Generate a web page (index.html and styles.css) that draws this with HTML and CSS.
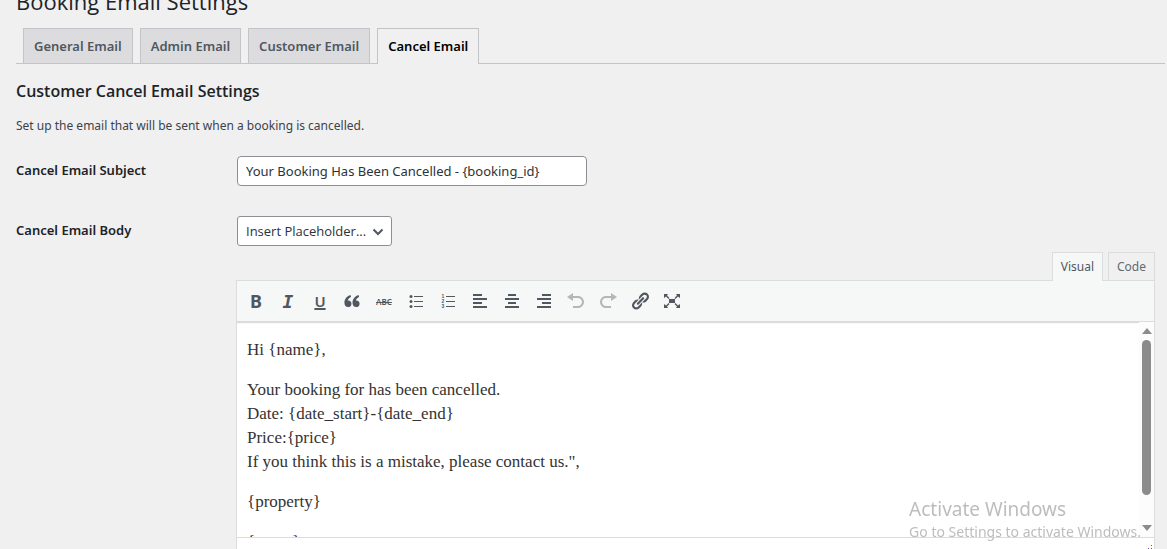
FILE: index.html
```html
<!DOCTYPE html>
<html lang="en">
<head>
<meta charset="UTF-8">
<meta name="viewport" content="width=device-width, initial-scale=1.0">
<title>Booking Email Settings</title>
<link rel="stylesheet" href="styles.css">
</head>
<body>

<div class="wrap">
  <h1>Booking Email Settings</h1>

  <nav class="nav-tab-wrapper">
    <a href="#general" class="nav-tab">General Email</a>
    <a href="#admin" class="nav-tab">Admin Email</a>
    <a href="#customer" class="nav-tab">Customer Email</a>
    <a href="#cancel" class="nav-tab nav-tab-active">Cancel Email</a>
  </nav>

  <form class="settings">
    <h2>Customer Cancel Email Settings</h2>
    <p class="description">Set up the email that will be sent when a booking is cancelled.</p>

    <div class="form-row">
      <label for="subject">Cancel Email Subject</label>
      <div class="field">
        <input type="text" id="subject" class="regular-text" value="Your Booking Has Been Cancelled - {booking_id}">
      </div>
    </div>

    <div class="form-row">
      <label for="placeholder">Cancel Email Body</label>
      <div class="field">
        <div class="select-wrap">
          <select id="placeholder">
            <option>Insert Placeholder...</option>
            <option>{name}</option>
            <option>{booking_id}</option>
            <option>{price}</option>
          </select>
          <svg class="chevron" viewBox="0 0 12 8"><path d="M1.500 1.500L6 6l4.500-4.500"/></svg>
        </div>

        <div class="editor-wrap">
          <div class="editor-tabs">
            <button type="button" class="switch-editor active">Visual</button>
            <button type="button" class="switch-editor">Code</button>
          </div>

          <div class="editor">
            <div class="toolbar">
              <button type="button" class="tool bold" aria-label="Bold">B</button>
              <button type="button" class="tool italic" aria-label="Italic">I</button>
              <button type="button" class="tool underline" aria-label="Underline">U</button>
              <button type="button" class="tool" aria-label="Blockquote">
                <svg viewBox="0 0 20 20"><path d="M8.500 4C5 5 2.400 8 2.400 11.800c0 2.700 1.500 4.300 3.700 4.300 2 0 3.400-1.400 3.400-3.400 0-1.900-1.300-3.200-3.100-3.200-.3 0-.6.100-.8.200.3-1.600 1.400-2.800 3.400-3.800zM16.600 4c-3.500 1-6.100 4-6.100 7.800 0 2.700 1.500 4.300 3.700 4.300 2 0 3.400-1.400 3.400-3.400 0-1.900-1.300-3.200-3.100-3.200-.3 0-.6.100-.8.200.3-1.600 1.400-2.800 3.400-3.800z"/></svg>
              </button>
              <button type="button" class="tool strike" aria-label="Strikethrough">ABC</button>
              <button type="button" class="tool" aria-label="Bulleted list">
                <svg viewBox="0 0 20 20"><path d="M8 5h9v1H8zM8 10h9v1H8zM8 15h9v1H8z"/><circle cx="5" cy="5.500" r="1.500"/><circle cx="5" cy="10.500" r="1.500"/><circle cx="5" cy="15.500" r="1.500"/></svg>
              </button>
              <button type="button" class="tool" aria-label="Numbered list">
                <svg viewBox="0 0 20 20"><path d="M8 5h9v1H8zM8 10h9v1H8zM8 15h9v1H8z"/><text x="5" y="7">1</text><text x="5" y="12">2</text><text x="5" y="17">3</text></svg>
              </button>
              <button type="button" class="tool" aria-label="Align left">
                <svg viewBox="0 0 20 20"><path d="M3 3h9v2H3zM3 7h14v2H3zM3 11h9v2H3zM3 15h14v2H3z"/></svg>
              </button>
              <button type="button" class="tool" aria-label="Align center">
                <svg viewBox="0 0 20 20"><path d="M6 3h8v2H6zM3 7h14v2H3zM6 11h8v2H6zM3 15h14v2H3z"/></svg>
              </button>
              <button type="button" class="tool" aria-label="Align right">
                <svg viewBox="0 0 20 20"><path d="M8 3h9v2H8zM3 7h14v2H3zM8 11h9v2H8zM3 15h14v2H3z"/></svg>
              </button>
              <button type="button" class="tool" aria-label="Undo" disabled>
                <svg viewBox="0 0 20 20"><path d="M12 5H7V2L1 6l6 4V7h5c2.200 0 4 1.800 4 4s-1.800 4-4 4H7v2h5c3.300 0 6-2.700 6-6s-2.700-6-6-6z"/></svg>
              </button>
              <button type="button" class="tool" aria-label="Redo" disabled>
                <svg viewBox="0 0 20 20"><path d="M8 5h5V2l6 4-6 4V7H8c-2.200 0-4 1.800-4 4s1.800 4 4 4h5v2H8c-3.300 0-6-2.700-6-6s2.700-6 6-6z"/></svg>
              </button>
              <button type="button" class="tool" aria-label="Insert link">
                <svg viewBox="0 0 20 20"><path d="M17.740 2.760c1.680 1.690 1.680 4.410 0 6.100l-1.530 1.520c-1.120 1.120-2.700 1.470-4.140 1.090l2.620-2.610.76-.77.76-.76c.84-.84.84-2.200 0-3.040-.84-.85-2.200-.85-3.040 0l-.77.76-3.380 3.380c-.37-1.440-.02-3.020 1.100-4.140l1.520-1.530c1.690-1.680 4.420-1.680 6.100 0zM8.590 13.430l5.340-5.340c.42-.42.42-1.100 0-1.520-.44-.43-1.130-.39-1.530 0l-5.330 5.340c-.42.42-.42 1.100 0 1.520.44.43 1.130.39 1.520 0zM7.830 15.720l4.140-4.150c.38 1.440.03 3.020-1.090 4.140l-1.520 1.530c-1.690 1.680-4.410 1.680-6.100 0-1.680-1.680-1.680-4.420 0-6.100l1.530-1.520c1.120-1.120 2.700-1.470 4.140-1.100l-4.140 4.150c-.85.84-.85 2.200 0 3.050.84.84 2.200.84 3.040 0z"/></svg>
              </button>
              <button type="button" class="tool" aria-label="Fullscreen">
                <svg viewBox="0 0 20 20"><path d="M7 8h6v4H7zM2 3h4L5 4.500 7.500 7l-1 1L4 5.500 2 7zM18 3h-4l1 1.500L12.500 7l1 1L16 5.500 18 7zM2 17h4l-1-1.500L7.500 13l-1-1L4 14.500 2 13zM18 17h-4l1-1.500-2.500-2.500 1-1 2.500 2.500 2-1.500z"/></svg>
              </button>
            </div>

            <div class="edit-area">
              <div class="edit-content" contenteditable="true" role="textbox" aria-multiline="true" aria-label="Cancel Email Body" spellcheck="false">
                <p>Hi {name},</p>
                <p>Your booking for has been cancelled.<br>
                Date: {date_start}-{date_end}<br>
                Price:{price}<br>
                If you think this is a mistake, please contact us.",</p>
                <p>{property}</p>
                <p>{name}</p>
              </div>
              <div class="scrollbar" aria-hidden="true">
                <svg viewBox="0 0 10 6"><path d="M0 6l5-6 5 6z"/></svg>
                <div class="thumb"></div>
                <svg viewBox="0 0 10 6"><path d="M0 0l5 6 5-6z"/></svg>
              </div>
            </div>

            <div class="statusbar">
              <svg viewBox="0 0 10 10"><path d="M8 0h1v1H8zM5 3h1v1H5zM8 3h1v1H8zM2 6h1v1H2zM5 6h1v1H5zM8 6h1v1H8z"/></svg>
            </div>
          </div>
        </div>
      </div>
    </div>
  </form>
</div>

<!-- desktop notice, sits over the editor -->
<div class="watermark">
  <div class="watermark-title">Activate Windows</div>
  <div class="watermark-text">Go to Settings to activate Windows.</div>
</div>

</body>
</html>
```
FILE: styles.css
```css
* {
  box-sizing: border-box;
}
html, body {
  height: 100%;
}
body {
  margin: 0;
  overflow: hidden;
  background: #f0f0f1;
  color: #3c434a;
  font-family: "Noto Sans", "Open Sans", sans-serif;
  font-size: 12px;
  line-height: 20px;
}
input, select, button {
  font-family: inherit;
}
h1, h2 {
  font-family: "Open Sans", "Noto Sans", sans-serif;
}

/* page is scrolled a little, so the heading is cut by the window */
.wrap {
  margin: -14px 2px 0 16px;
}
h1 {
  margin: 0;
  color: #1d2327;
  font-size: 22px;
  font-weight: 400;
  line-height: 30px;
}

/* tabs */
.nav-tab-wrapper {
  display: flex;
  gap: 7px;
  margin-top: 12px;
  padding-left: 7px;
  border-bottom: 1px solid #c3c4c7;
}
.nav-tab {
  padding: 5px 10px;
  border: 1px solid #c3c4c7;
  border-bottom: none;
  background: #dcdcde;
  color: #50575e;
  font-size: 13px;
  font-weight: 600;
  line-height: 24px;
  text-decoration: none;
}
.nav-tab-active {
  margin-bottom: -1px;
  padding-bottom: 6px;
  background: #f0f0f1;
  color: #000;
}

/* form */
.settings {
  margin-right: 10px;
}
h2 {
  margin: 16px 0 14px;
  color: #1d2327;
  font-size: 16px;
  font-weight: 600;
  line-height: 22px;
}
.description {
  margin: 0 0 20px;
}
.form-row {
  display: grid;
  grid-template-columns: 220px 1fr;
  margin-bottom: 30px;
}
.form-row > label {
  padding-top: 4px;
  color: #1d2327;
  font-size: 13px;
  font-weight: 600;
}
.field {
  min-width: 0;
}
.regular-text, .select-wrap select {
  display: block;
  height: 30px;
  margin: 0;
  border: 1px solid #8c8f94;
  border-radius: 4px;
  background: #fff;
  color: #2c3338;
  font-size: 13px;
}
.regular-text {
  width: 350px;
  max-width: 100%;
  margin-left: 1px;
  padding: 0 8px;
}
.select-wrap {
  position: relative;
  width: 155px;
  margin-left: 1px;
}
.select-wrap select {
  width: 100%;
  padding: 0 20px 0 8px;
  border-radius: 3px;
  font-family: "Open Sans", "Noto Sans", sans-serif;
  appearance: none;
  -webkit-appearance: none;
}
.chevron {
  position: absolute;
  top: 12px;
  right: 8px;
  width: 12px;
  height: 8px;
  fill: none;
  stroke: #50575e;
  stroke-width: 2;
  pointer-events: none;
}

/* editor */
.editor-wrap {
  margin-top: 6px;
}
.editor-tabs {
  display: flex;
  justify-content: flex-end;
  gap: 5px;
}
.switch-editor {
  height: 28px;
  padding: 0 8px;
  border: 1px solid #dcdcde;
  border-bottom: none;
  background: #f0f0f1;
  color: #646970;
  font-size: 12px;
}
.switch-editor.active {
  height: 29px;
  margin-bottom: -1px;
  padding-bottom: 1px;
  background: #f6f7f7;
  color: #50575e;
  z-index: 1;
}
.editor {
  border: 1px solid #dcdcde;
  background: #fff;
}
.toolbar {
  display: flex;
  padding: 5px 3px;
  border-bottom: 1px solid #dcdcde;
  background: #f6f7f7;
  box-shadow: 0 1px 1px #dcdcde;
}
.tool {
  display: flex;
  align-items: center;
  justify-content: center;
  width: 32px;
  height: 30px;
  padding: 0;
  border: none;
  background: transparent;
  color: #50575e;
}
.tool svg {
  width: 20px;
  height: 20px;
  fill: #50575e;
}
.tool:disabled svg {
  fill: #b4b7ba;
}
.tool text {
  font-family: "Liberation Sans", sans-serif;
  font-size: 5px;
  font-weight: 700;
  text-anchor: middle;
}
.bold {
  font-size: 18px;
  font-weight: 700;
}
.italic {
  font-family: "DejaVu Sans Mono", monospace;
  font-size: 18px;
  font-style: italic;
  font-weight: 700;
}
.underline {
  font-size: 15px;
  font-weight: 600;
  text-decoration: underline;
  text-decoration-thickness: 2px;
}
.strike {
  font-size: 8px;
  font-weight: 600;
  text-decoration: line-through;
}

.edit-area {
  display: flex;
  height: 216px;
  border-bottom: 1px solid #dcdcde;
}
.edit-content {
  flex: 1;
  overflow: hidden;
  padding: 16px 10px 0;
  color: #333;
  font-family: "Liberation Serif", serif;
  font-size: 17px;
  line-height: 24px;
  outline: none;
}
.edit-content p {
  margin: 0 0 16px;
}
.scrollbar {
  display: flex;
  flex-direction: column;
  align-items: center;
  width: 15px;
  padding: 6px 0;
  background: #fcfcfc;
}
.scrollbar svg {
  width: 10px;
  height: 6px;
  fill: #8b8b8b;
}
.thumb {
  flex: 0 0 155px;
  width: 9px;
  margin: 6px 0 auto;
  border-radius: 5px;
  background: #8b8b8b;
}
.statusbar {
  display: flex;
  justify-content: flex-end;
  height: 24px;
  padding: 7px 1px;
}
.statusbar svg {
  width: 10px;
  height: 10px;
  fill: #7a4a9a;
}

.watermark {
  position: fixed;
  right: 26px;
  bottom: 7px;
  color: #bdbdbd;
  pointer-events: none;
}
.watermark-title {
  font-size: 19px;
  line-height: 26px;
}
.watermark-text {
  font-size: 14px;
  line-height: 20px;
}
```
